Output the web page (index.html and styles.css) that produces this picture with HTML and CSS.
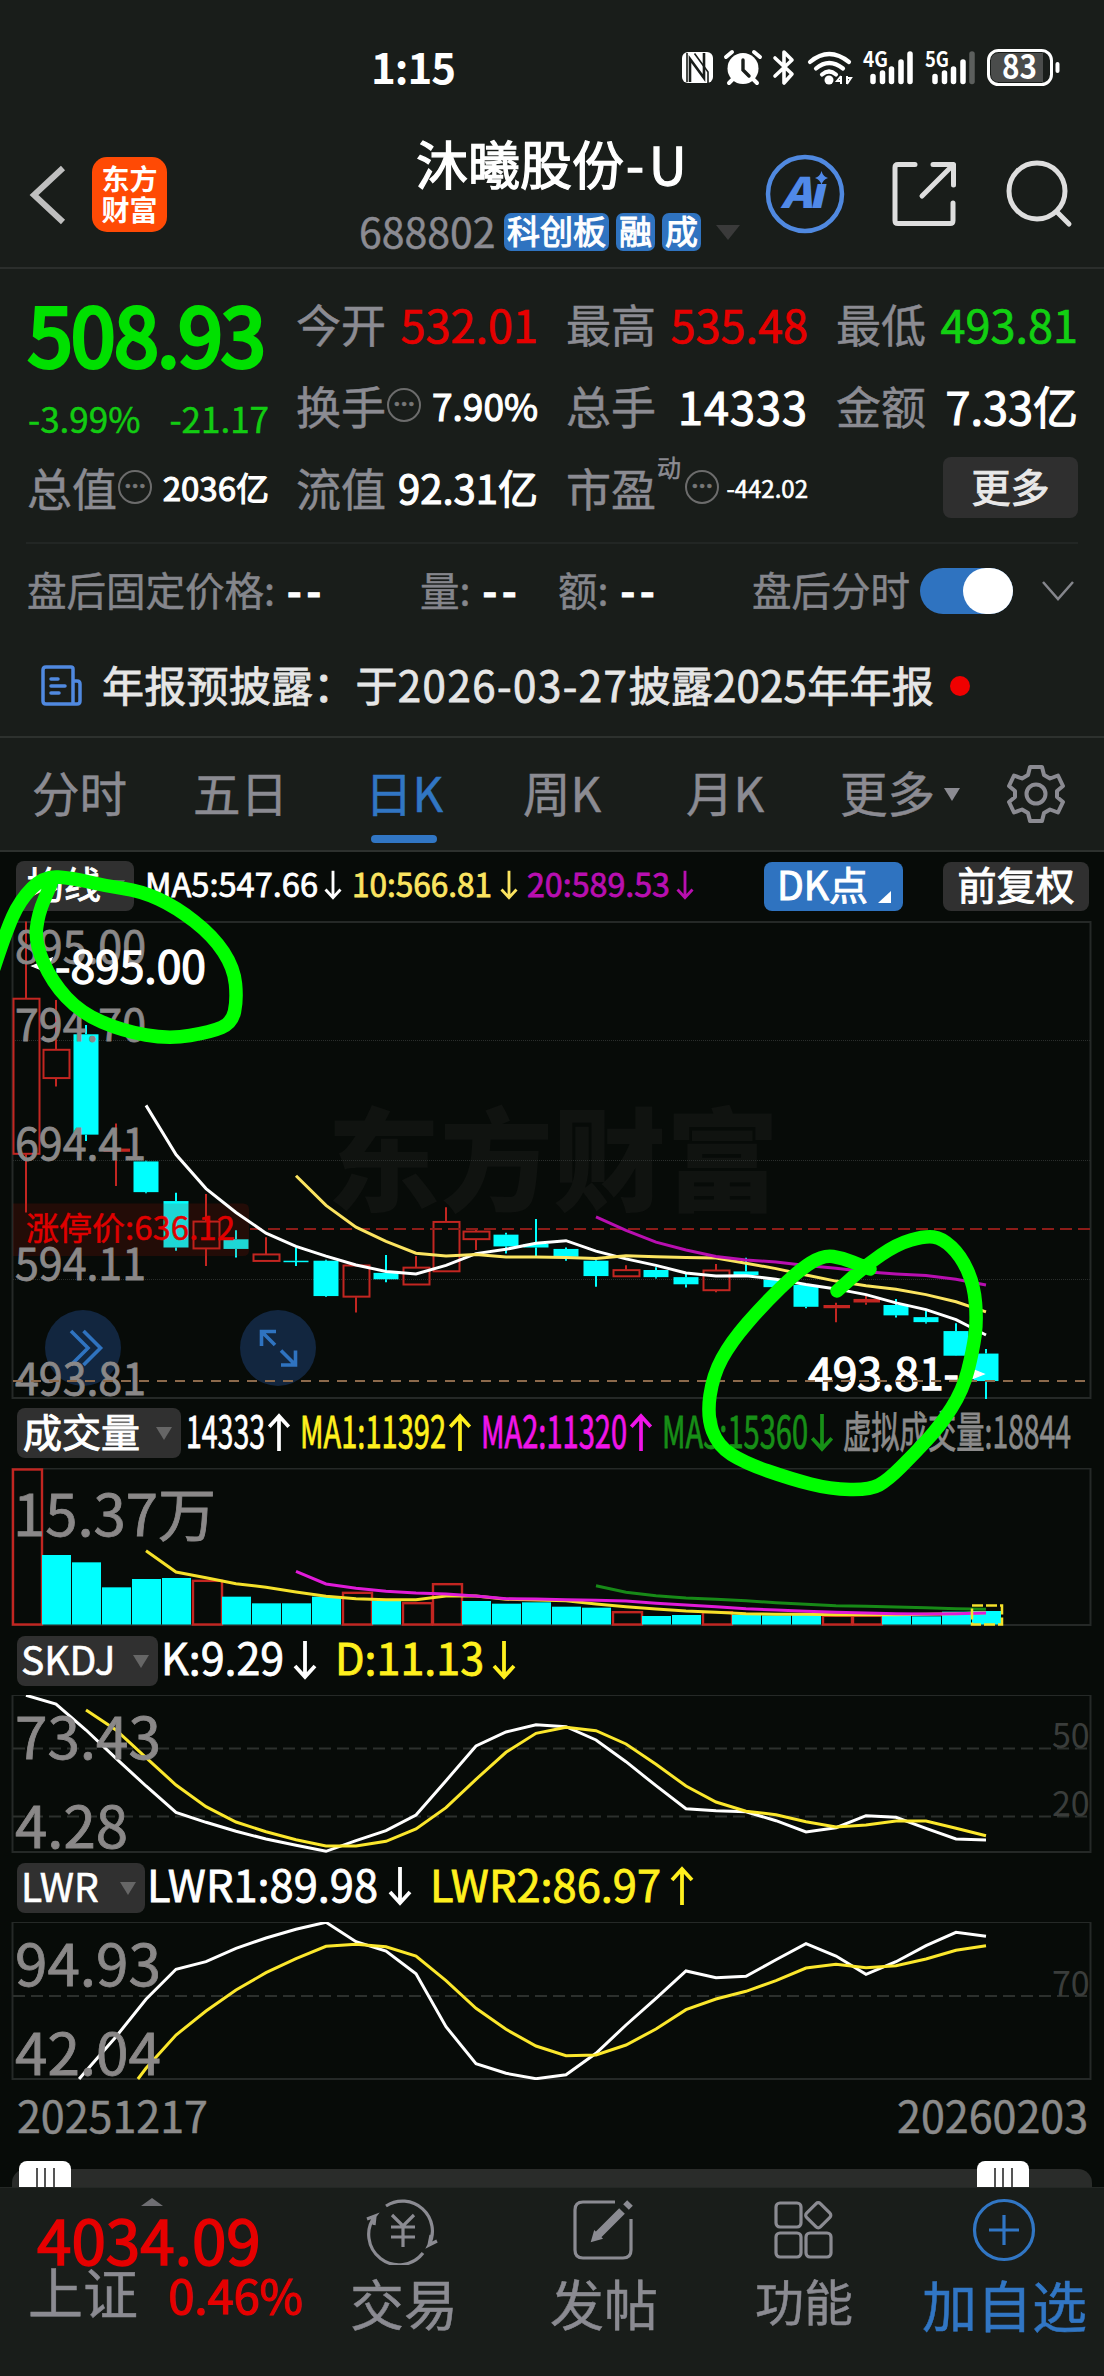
FILE: index.html
```html
<!DOCTYPE html>
<html lang="zh-CN">
<head>
    <meta charset="UTF-8">
    <meta name="viewport" content="width=device-width, initial-scale=1.0">
    <title>沐曦股份-U 688802</title>
    <link rel="stylesheet" href="styles.css">
</head>
<body>
<div class="phone">
    <div class="status-bar">
        <span class="clock">1:15</span>
        <svg class="status-icons" viewBox="670 36 400 64" width="400" height="64">
            <rect x="682" y="52" width="31" height="31" rx="6" fill="#fff"/>
            <path d="M690 82V59l14 19V53" fill="none" stroke="#191d1a" stroke-width="2.6"/>
            <path d="M694.500 53.500L708 72V83M687 53V82" fill="none" stroke="#191d1a" stroke-width="1.600"/>
            <circle cx="743" cy="68.500" r="15.500" fill="#fff"/>
            <path d="M726 57l6-5M760 57l-6-5M733 79l-4 4M753 79l4 4" stroke="#fff" stroke-width="4" stroke-linecap="round"/>
            <path d="M743 60v10l6 6" fill="none" stroke="#191d1a" stroke-width="3.400" stroke-linecap="round"/>
            <path d="M775 58l17 16-8 9V52l8 8-17 16" fill="none" stroke="#fff" stroke-width="3.600" stroke-linejoin="round" stroke-linecap="round"/>
            <g fill="none" stroke="#fff" stroke-width="4.200" stroke-linecap="round">
                <path d="M810 62q19-16 39 0"/>
                <path d="M816 68.500q13-11 27 0"/>
                <path d="M822 74.500q7-6 14 0"/>
            </g>
            <circle cx="829" cy="80" r="4.500" fill="#fff"/>
            <path d="M841 76v8M841 76l-4 5h4M847 84v-8M847 84l4-6h-4" stroke="#fff" stroke-width="2" fill="none"/>
            <text class="net" x="863" y="67" textLength="25" lengthAdjust="spacingAndGlyphs">4G</text>
            <text class="net" x="925" y="67" textLength="24" lengthAdjust="spacingAndGlyphs">5G</text>
            <g stroke="#fff" stroke-width="5.500" stroke-linecap="round">
                <path d="M873 76.500v5M882.500 73v8.500M891.500 69v12.500M901 62v19.500M910 54v27.500"/>
                <path d="M935 76.500v5M944.500 73v8.500M953.500 69v12.500M963 62v19.500"/>
                <path d="M972 54v27.500" stroke="#5c5f5d"/>
            </g>
            <rect x="988.500" y="50.500" width="63" height="34" rx="10" fill="#191d1a" stroke="#fff" stroke-width="3"/>
            <path d="M999 53h44v29h-44q-8 0-8-8v-13q0-8 8-8z" fill="#4a4c4b"/>
            <path d="M1057.500 64v7" stroke="#fff" stroke-width="4" stroke-linecap="round"/>
            <text class="battery" x="1002" y="79" textLength="35" lengthAdjust="spacingAndGlyphs">83</text>
        </svg>
    </div>

    <header class="header">
        <svg class="back" viewBox="0 0 40 64" width="40" height="64"><path d="M35 5L6 32l29 27" fill="none" stroke="#bfbfbf" stroke-width="6"/></svg>
        <div class="logo"><span>东方</span><span>财富</span></div>
        <div class="stock">
            <h1>沐曦股份<span>-U</span></h1>
            <div class="stock-sub">
                <span class="code">688802</span>
                <span class="tag">科创板</span>
                <span class="tag">融</span>
                <span class="tag">成</span>
                <i class="tri"></i>
            </div>
        </div>
        <svg class="header-icons" viewBox="750 140 340 100" width="340" height="100">
            <circle cx="804" cy="194" r="37" fill="none" stroke="#5089e0" stroke-width="4.500"/>
            <text class="ai" x="780" y="208" textLength="46" lengthAdjust="spacingAndGlyphs">Aı</text>
            <path d="M820.500 171q1.500 5.500 6.500 7-5 1.500-6.500 7-1.500-5.500-6.500-7 5-1.500 6.500-7z" fill="#5089e8"/>
            <g fill="none" stroke="#dedede" stroke-width="5" stroke-linecap="round" stroke-linejoin="round">
                <path d="M914 164.500h-17q-3 0-3 3v53q0 3 3 3h52q3 0 3-3V203"/>
                <path d="M932 164.500h20.500V185M951 166l-30 30"/>
                <circle cx="1036" cy="191" r="28"/>
                <path d="M1056 212l12 12"/>
            </g>
        </svg>
    </header>

    <section class="quote">
        <div class="quote-main">
            <div class="price">508.93</div>
            <div class="change"><span>-3.99%</span><span>-21.17</span></div>
            <div class="cell"><label>总值</label><i class="dots">•••</i><b class="v33">2036亿</b></div>
        </div>
        <div class="quote-grid">
            <div class="cell"><label>今开</label><b class="red">532.01</b></div>
            <div class="cell"><label>最高</label><b class="red">535.48</b></div>
            <div class="cell"><label>最低</label><b class="green">493.81</b></div>
            <div class="cell"><label>换手</label><i class="dots">•••</i><b class="v37">7.90%</b></div>
            <div class="cell"><label>总手</label><b class="wide">14333</b></div>
            <div class="cell"><label>金额</label><b>7.33亿</b></div>
            <div class="cell"><label>流值</label><b class="v40">92.31亿</b></div>
            <div class="cell"><label>市盈</label><sup>动</sup><i class="dots">•••</i><b class="v24">-442.02</b></div>
            <div class="cell"><button class="more">更多</button></div>
        </div>
    </section>

    <section class="after-hours">
        <span class="ah-price">盘后固定价格:<b>--</b></span>
        <span class="ah-vol">量:<b>--</b></span>
        <span class="ah-amt">额:<b>--</b></span>
        <span class="ah-line">盘后分时</span>
        <span class="toggle"><i></i></span>
        <svg viewBox="0 0 34 22" width="34" height="22"><path d="M2 2l15 17L32 2" fill="none" stroke="#85868c" stroke-width="2.500"/></svg>
    </section>

    <section class="notice">
        <svg viewBox="0 0 42 42" width="42" height="42" fill="none" stroke="#5089e0" stroke-width="3.500" stroke-linejoin="round" stroke-linecap="round">
            <path d="M5 2h25q2 0 2 2v35H5q-3 0-3-3V5q0-3 3-3zM32 16h4q3 0 3 3v17q0 3-3 3h-4M10 14h7M10 21h14M10 28h8"/>
        </svg>
        <p>年报预披露：于<span>2026-03-27</span>披露2025年年报</p>
        <i class="red-dot"></i>
    </section>

    <nav class="tabs">
        <span>分时</span>
        <span>五日</span>
        <span class="active">日K</span>
        <span>周K</span>
        <span>月K</span>
        <span>更多<i class="tri"></i></span>
        <svg viewBox="-30 -30 60 60" width="60" height="60" fill="none" stroke="#8b8b92" stroke-width="4" stroke-linejoin="round">
            <path d="M-6 -27H6L8 -19L14 -15.500L22 -18.500L27 -8L21 -3V3L27 8L22 18.500L14 15.500L8 19L6 27H-6L-8 19L-14 15.500L-22 18.500L-27 8L-21 3V-3L-27 -8L-22 -18.500L-14 -15.500L-8 -19Z"/>
            <circle r="9.500"/>
        </svg>
    </nav>

    <main class="charts">
        <svg width="0" height="0" class="defs">
            <symbol id="down" viewBox="0 0 24 40"><path d="M12 1v36M2 26l10 11 10-11" fill="none" stroke="currentColor" stroke-width="3.800"/></symbol>
            <symbol id="up" viewBox="0 0 24 40"><path d="M12 39V3M2 14L12 3l10 11" fill="none" stroke="currentColor" stroke-width="3.800"/></symbol>
        </svg>

        <div class="legend legend-ma">
            <span class="badge">均线<i class="tri"></i></span>
            <svg viewBox="140 852 600 69" width="600" height="69" class="t32">
                <g class="c-white"><text x="145" y="897" textLength="173" lengthAdjust="spacingAndGlyphs">MA5:547.66</text><use href="#down" x="323" y="870" width="20" height="30"/></g>
                <g class="c-lemon"><text x="352" y="897" textLength="140" lengthAdjust="spacingAndGlyphs">10:566.81</text><use href="#down" x="499" y="870" width="20" height="30"/></g>
                <g class="c-purple"><text x="527" y="897" textLength="143" lengthAdjust="spacingAndGlyphs">20:589.53</text><use href="#down" x="675" y="870" width="20" height="30"/></g>
            </svg>
            <span class="dk">DK点<i></i></span>
            <span class="fq">前复权</span>
        </div>
        <svg class="panel" id="kline" viewBox="0 921 1104 478" width="1104" height="478">
            <text class="watermark" x="327" y="1203" textLength="452" lengthAdjust="spacingAndGlyphs">东方财富</text>
            <rect class="frame" x="12.500" y="922" width="1078" height="476"/>
            <path class="dotted" d="M13 1040.500H1090M13 1160.500H1090M13 1279.500H1090"/>
            <g class="bars"></g>
            <path d="M13 1203.500H243q6 0 6 6V1250q0 6-6 6H13z" fill="#b01008" opacity=".17"/>
            <path d="M250 1229H1090" stroke="#8c1c18" stroke-width="2" stroke-dasharray="12 6"/>
            <g class="lines"></g>
            <text x="26" y="1240" class="limit" textLength="209" lengthAdjust="spacingAndGlyphs">涨停价:636.12</text>
            <g fill="none" stroke="#2f73c0" stroke-width="3.600">
                <circle class="round" cx="83" cy="1348" r="38"/>
                <path d="M71 1331l17 17-17 17M83.500 1331l17 17-17 17"/>
                <circle class="round" cx="278" cy="1348" r="38"/>
                <path d="M276 1331.500h-14.500v14.500M262 1332l13 13M281 1365h14.500v-14.500M295 1364.500l-14-14"/>
            </g>
            <g class="axis43">
                <text x="15" y="962.500" textLength="131" lengthAdjust="spacingAndGlyphs">895.00</text>
                <text x="15" y="1041" textLength="131" lengthAdjust="spacingAndGlyphs">794.70</text>
                <text x="15" y="1159.500" textLength="131" lengthAdjust="spacingAndGlyphs">694.41</text>
                <text x="15" y="1280" textLength="131" lengthAdjust="spacingAndGlyphs">594.11</text>
                <text x="15" y="1394.500" textLength="131" lengthAdjust="spacingAndGlyphs">493.81</text>
            </g>
            <g class="peak">
                <text x="55" y="983" textLength="151" lengthAdjust="spacingAndGlyphs">-895.00</text>
                <path d="M32 966l20-8-4 8 4 8z" fill="#fff"/>
                <text x="808" y="1390" textLength="151" lengthAdjust="spacingAndGlyphs">493.81-</text>
                <path d="M984 1374l-20-8 4 8-4 8z" fill="#fff"/>
            </g>
            <path d="M13 1381H1090" stroke="#8c6a4c" stroke-width="2" stroke-dasharray="10 8"/>
        </svg>

        <div class="legend legend-vol">
            <span class="badge">成交量<i class="tri"></i></span>
            <svg viewBox="181 1399 910 69" width="910" height="69" class="t43">
                <g class="c-white"><text x="186" y="1448" textLength="79" lengthAdjust="spacingAndGlyphs">14333</text><use href="#up" x="267" y="1413" width="24" height="39"/></g>
                <g class="c-yellow"><text x="300" y="1448" textLength="146" lengthAdjust="spacingAndGlyphs">MA1:11392</text><use href="#up" x="448" y="1413" width="24" height="39"/></g>
                <g class="c-magenta"><text x="481" y="1448" textLength="146" lengthAdjust="spacingAndGlyphs">MA2:11320</text><use href="#up" x="629" y="1413" width="24" height="39"/></g>
                <g class="c-green"><text x="662" y="1448" textLength="146" lengthAdjust="spacingAndGlyphs">MA3:15360</text><use href="#down" x="810" y="1413" width="24" height="39"/></g>
                <g class="c-gray"><text x="843" y="1448" textLength="228" lengthAdjust="spacingAndGlyphs">虚拟成交量:18844</text></g>
            </svg>
        </div>
        <svg class="panel" id="volume" viewBox="0 1468 1104 158" width="1104" height="158">
            <rect class="frame" x="12.500" y="1468.500" width="1078" height="156.500"/>
            <g class="bars"></g>
            <g class="lines"></g>
            <rect x="972" y="1605.500" width="30" height="19" fill="none" stroke="#f5e12a" stroke-width="2.500" stroke-dasharray="11 3"/>
            <text class="axis57" x="13" y="1536" textLength="203" lengthAdjust="spacingAndGlyphs">15.37万</text>
        </svg>

        <div class="legend legend-skdj">
            <span class="badge">SKDJ<i class="tri"></i></span>
            <svg viewBox="158 1626 500 69" width="500" height="69" class="t43">
                <g class="c-white"><text x="161" y="1675" textLength="123" lengthAdjust="spacingAndGlyphs">K:9.29</text><use href="#down" x="293" y="1640" width="24" height="40"/></g>
                <g class="c-yellow"><text x="335" y="1675" textLength="149" lengthAdjust="spacingAndGlyphs">D:11.13</text><use href="#down" x="492" y="1640" width="24" height="40"/></g>
            </svg>
        </div>
        <svg class="panel" id="skdj" viewBox="0 1695 1104 158" width="1104" height="158">
            <rect class="frame" x="12.500" y="1695" width="1078" height="157"/>
            <path class="dashed" d="M13 1748.500H1090M13 1816.500H1090"/>
            <text class="ref" x="1052" y="1748">50</text><text class="ref" x="1052" y="1816">20</text>
            <g class="lines"></g>
            <text class="axis57" x="15" y="1759" textLength="146" lengthAdjust="spacingAndGlyphs">73.43</text>
            <text class="axis57" x="15" y="1848" textLength="113" lengthAdjust="spacingAndGlyphs">4.28</text>
        </svg>

        <div class="legend legend-lwr">
            <span class="badge">LWR<i class="tri"></i></span>
            <svg viewBox="145 1853 600 69" width="600" height="69" class="t43">
                <g class="c-white"><text x="147" y="1902" textLength="231" lengthAdjust="spacingAndGlyphs">LWR1:89.98</text><use href="#down" x="388" y="1866" width="24" height="40"/></g>
                <g class="c-yellow"><text x="430" y="1902" textLength="231" lengthAdjust="spacingAndGlyphs">LWR2:86.97</text><use href="#up" x="670" y="1866" width="24" height="40"/></g>
            </svg>
        </div>
        <svg class="panel" id="lwr" viewBox="0 1922 1104 158" width="1104" height="158">
            <rect class="frame" x="12.500" y="1922" width="1078" height="157"/>
            <path class="dashed" d="M13 1996H1090"/>
            <text class="ref" x="1052" y="1996">70</text>
            <g class="lines"></g>
            <text class="axis57" x="15" y="1986" textLength="146" lengthAdjust="spacingAndGlyphs">94.93</text>
            <text class="axis57" x="15" y="2075" textLength="146" lengthAdjust="spacingAndGlyphs">42.04</text>
        </svg>

        <div class="dates"><span>20251217</span><span>20260203</span></div>
        <div class="slider"><div class="track"></div><i class="handle left"></i><i class="handle right"></i></div>
    </main>

    <footer class="bottom">
        <div class="index">
            <i class="tri-up"></i>
            <div class="index-value">4034.09</div>
            <div class="index-row"><span>上证</span><b>0.46%</b></div>
        </div>
        <div class="item">
            <svg viewBox="-40 -35 80 70" width="80" height="70" fill="none" stroke="#8b8b92" stroke-width="3.200">
                <path d="M-17 -24A30 30 0 0 1 26 15l8-4M26 15l2-10M20 23A30 30 0 0 1 -28 -14l-8 3M-28 -14l-1 9"/>
                <path d="M-11 -15L0 -4 11 -15M0 -4V17M-12 -3H12M-12 7H12"/>
            </svg>
            <span>交易</span>
        </div>
        <div class="item">
            <svg viewBox="-35 -35 70 70" width="70" height="70" fill="none" stroke="#8b8b92" stroke-width="3.200">
                <path d="M12 -28H-20q-8 0-8 8V20q0 8 8 8H20q8 0 8-8V-11"/>
                <path d="M-6 6L19 -19M23 -23L27 -27" stroke-width="8"/>
                <path d="M-10 10l2-7 5 5z" fill="#8b8b92"/>
            </svg>
            <span>发帖</span>
        </div>
        <div class="item small">
            <svg viewBox="-35 -35 70 70" width="70" height="70" fill="none" stroke="#8b8b92" stroke-width="3.200" stroke-linejoin="round">
                <rect x="-27" y="-27" width="25" height="24" rx="4"/>
                <rect x="-27" y="3" width="25" height="24" rx="4"/>
                <rect x="3" y="3" width="25" height="24" rx="4"/>
                <rect x="5.500" y="-24.500" width="19.500" height="19.500" rx="3" transform="rotate(45 15.250 -14.750)"/>
            </svg>
            <span>功能</span>
        </div>
        <div class="item blue">
            <svg viewBox="-35 -35 70 70" width="70" height="70" fill="none" stroke="#3176c4" stroke-width="3.200">
                <circle r="29.500"/><path d="M-15 0H15M0 -15V15"/>
            </svg>
            <span>加自选</span>
        </div>
    </footer>

    <svg class="marks" viewBox="0 0 1104 2376" width="1104" height="2376"></svg>
</div>
<script src="chart.js"></script>
</body>
</html>
```

FILE: styles.css
```css
* {
    box-sizing: border-box;
}

body {
    margin: 0;
    background: #191d1a;
    color: #fff;
    font-family: "Noto Sans CJK SC", "Noto Sans", sans-serif;
    -webkit-text-stroke: 0.5px;
}

i {
    font-style: normal;
}

b {
    font-weight: 400;
    -webkit-text-stroke: 1.1px;
}

.phone {
    position: relative;
    width: 1104px;
    height: 2376px;
    overflow: hidden;
}

.tri {
    display: inline-block;
    border: 8px solid transparent;
    border-top: 13px solid #666;
    border-bottom: 0;
}

/* status bar */
.status-bar {
    display: flex;
    height: 100px;
    padding: 36px 34px 0 371px;
    justify-content: space-between;
}

.clock {
    font-size: 42px;
    font-weight: 700;
    line-height: 60px;
    letter-spacing: -1px;
    -webkit-text-stroke: 0;
}

.net {
    font-size: 21px;
    font-weight: 700;
    fill: #fff;
}

.battery {
    font-size: 33px;
    font-weight: 700;
    fill: #fff;
}

/* header */
.header {
    display: flex;
    height: 169px;
    border-bottom: 2px solid #2b2e2c;
}

.back {
    margin: 63px 24px 0 28px;
}

.logo {
    display: flex;
    flex-direction: column;
    justify-content: center;
    width: 75px;
    height: 75px;
    margin-top: 57px;
    padding-bottom: 2px;
    border-radius: 15px;
    background: #ff4a05;
    font-size: 28px;
    font-weight: 700;
    line-height: 31px;
    text-align: center;
    -webkit-text-stroke: 0;
}

.stock {
    width: 385px;
    margin-left: 192px;
}

.stock h1 {
    margin: 28px 0 0 57px;
    font-size: 52px;
    font-weight: 400;
    line-height: 70px;
    white-space: nowrap;
    -webkit-text-stroke: 1.3px;
}

.stock h1 span {
    letter-spacing: 5px;
    margin-left: 2px;
}

.stock-sub {
    display: flex;
    align-items: center;
    height: 38px;
    margin-top: 15px;
}

.code {
    width: 145px;
    font-size: 41px;
    line-height: 38px;
    color: #8b8b92;
    padding-bottom: 4px;
}

.tag {
    height: 38px;
    margin-right: 7px;
    padding: 0 3px;
    border-radius: 7px;
    background: #2f73c0;
    font-size: 33px;
    line-height: 34px;
    -webkit-text-stroke: 1px;
}

.stock-sub .tri {
    margin-left: 8px;
    border-width: 15px 12px 0;
    border-top-color: #3a3a3a;
}

.header-icons {
    margin: 40px 0 0 7px;
}

.ai {
    font-size: 42px;
    font-weight: 900;
    font-style: italic;
    fill: #5089e8;
}

/* quote */
.quote {
    display: flex;
    height: 275px;
    margin: 0 26px;
    padding: 13px 0 0 2px;
    border-bottom: 2px solid #222624;
}

.quote-main {
    width: 242px;
    margin-right: 28px;
}

.price {
    height: 100px;
    font-size: 80px;
    line-height: 100px;
    letter-spacing: -1.3px;
    color: #00e000;
    -webkit-text-stroke: 4px;
}

.change {
    display: flex;
    justify-content: space-between;
    height: 64px;
    font-size: 35px;
    line-height: 72px;
    color: #12cc12;
}

.quote-grid {
    display: grid;
    grid-template-columns: 241px 241px 241px;
    grid-auto-rows: 82px;
    column-gap: 29px;
}

.cell {
    display: flex;
    align-items: center;
    height: 82px;
    white-space: nowrap;
}

.cell label {
    margin-left: -1px;
    font-size: 45px;
    color: #8b8b92;
}

.cell b {
    margin-left: auto;
    font-size: 45px;
}

.cell .wide { letter-spacing: 1px; }
.cell .v40 { font-size: 40px; }
.cell .v37 { font-size: 37px; }
.cell .v33 { font-size: 33px; }
.cell .v24 { font-size: 24px; -webkit-text-stroke: 0.6px; }

.cell .red,
.cell .green {
    -webkit-text-stroke: 0.7px;
}

.cell sup {
    align-self: flex-start;
    margin: 6px 3px 0 1px;
    font-size: 24px;
    line-height: 30px;
    color: #8b8b92;
}

.dots {
    width: 34px;
    height: 34px;
    margin-left: 1px;
    border: 2.5px solid #6c6c6c;
    border-radius: 50%;
    font-family: "Liberation Sans", sans-serif;
    font-size: 15px;
    line-height: 28px;
    letter-spacing: 2px;
    text-indent: 2px;
    text-align: center;
    color: #777;
}

.red { color: #e60000; }
.green { color: #12d012; }

.more {
    width: 135px;
    height: 61px;
    margin-left: auto;
    padding: 0 0 5px;
    border: 0;
    border-radius: 8px;
    background: #2f2f2f;
    color: #e8e8e8;
    font: 400 39px "Noto Sans CJK SC", sans-serif;
    -webkit-text-stroke: 1px;
}

/* after hours */
.after-hours {
    display: flex;
    align-items: center;
    height: 93px;
    padding-left: 27px;
    font-size: 39.5px;
    line-height: 88px;
    color: #85868c;
    white-space: nowrap;
}

.after-hours b {
    margin-left: 12px;
    color: #fff;
    font-weight: 700;
    letter-spacing: 5px;
}

.ah-price { width: 393px; }
.ah-vol { width: 138px; }
.ah-amt { width: 194px; }
.ah-line { width: 168px; }

.after-hours span:not(.toggle) {
    padding-bottom: 3px;
}

.toggle {
    display: flex;
    justify-content: flex-end;
    width: 93px;
    height: 46px;
    margin-right: 28px;
    border-radius: 23px;
    background: #2f73c0;
}

.toggle i {
    width: 50px;
    height: 46px;
    border-radius: 25px;
    background: #fff;
}

/* notice */
.notice {
    display: flex;
    align-items: center;
    height: 101px;
    padding: 0 0 2px 41px;
    border-bottom: 2px solid #2d312e;
}

.notice p {
    margin: -5px 16px 0 19px;
    font-size: 42px;
    letter-spacing: 0.25px;
    color: #e6e6e6;
    white-space: nowrap;
    -webkit-text-stroke: 0.8px;
}

.notice p span {
    letter-spacing: 1.5px;
}

.red-dot {
    width: 20px;
    height: 20px;
    border-radius: 10px;
    background: #f00000;
}

/* tabs */
.tabs {
    display: grid;
    grid-template-columns: 161px 172px 158px 163px 154px 166px 60px;
    height: 114px;
    padding-left: 32px;
    border-bottom: 2px solid #2d312e;
    font-size: 47.5px;
    line-height: 107px;
    color: #8b8b92;
    white-space: nowrap;
}

.tabs .tri {
    margin: 0 0 11px 9px;
    border-top-color: #8b8b92;
}

.tabs svg {
    margin-top: 26px;
}

.tabs .active {
    color: #3176c4;
}

.tabs .active::after {
    content: "";
    display: block;
    width: 66px;
    height: 8px;
    margin: -10px 0 0 6px;
    border-radius: 4px;
    background: #3176c4;
}

/* charts */
.charts {
    background: #070b08;
}

.defs,
.panel,
.legend svg {
    display: block;
}

.defs {
    position: absolute;
}

.legend {
    display: flex;
    height: 69px;
    padding-left: 17px;
}

.legend-ma {
    padding-left: 16px;
}

.badge {
    display: flex;
    align-items: center;
    justify-content: space-between;
    height: 50px;
    margin-top: 9px;
    padding: 0 9px 7px 6px;
    border-radius: 8px;
    background: #303030;
    font-size: 39px;
    -webkit-text-stroke: 1px;
}

.badge .tri {
    margin-top: 7px;
}

.legend-ma .badge { width: 118px; font-size: 37px; padding-left: 11px; margin-right: 6px; }
.legend-vol .badge { width: 164px; }
.legend-skdj .badge { width: 141px; padding-left: 4px; }
.legend-lwr .badge { width: 128px; padding-left: 4px; }
.legend-skdj .badge,
.legend-lwr .badge { margin-top: 10px; -webkit-text-stroke: 0.6px; }

.legend text {
    stroke: currentColor;
    stroke-width: 0.8px;
}

.t32 text { font-size: 32px; }
.t43 text { font-size: 43px; }

.c-white { fill: #fff; color: #fff; }
.c-lemon { fill: #fbe460; color: #fbe460; }
.c-purple { fill: #b80fb0; color: #b80fb0; }
.c-yellow { fill: #fff01e; color: #fff01e; }
.c-magenta { fill: #f015e8; color: #f015e8; }
.c-green { fill: #178f17; color: #178f17; }
.c-gray { fill: #8b8b8b; color: #8b8b8b; }

.dk,
.fq {
    height: 49px;
    margin-top: 10px;
    border-radius: 8px;
    font-size: 39px;
    line-height: 43px;
    -webkit-text-stroke: 1px;
}

.dk {
    display: flex;
    width: 139px;
    margin-left: 24px;
    padding-left: 13px;
    background: #2f73c0;
}

.dk i {
    margin: 29px 0 0 10px;
    height: 0;
    border-left: 13px solid transparent;
    border-bottom: 12px solid #fff;
}

.fq {
    width: 146px;
    margin-left: 40px;
    text-align: center;
    background: #303030;
}

.frame {
    fill: none;
    stroke: #252927;
    stroke-width: 2;
}

.dotted {
    stroke: #2a2e2c;
    stroke-dasharray: 1 1;
}

.dashed {
    stroke: #2c302d;
    stroke-width: 2;
    stroke-dasharray: 12 6;
}

.round {
    fill: #12263f;
    stroke: none;
}

.watermark {
    font-size: 112px;
    font-weight: 900;
    fill: #101310;
}

.limit {
    font-size: 32px;
    fill: #e00000;
    stroke: #e00000;
    stroke-width: 0.5px;
}

.axis43,
.axis57 {
    font-size: 43px;
    fill: #8a8888;
    stroke: #8a8888;
    stroke-width: 0.8px;
}

.axis57 {
    font-size: 57px;
}

.ref {
    font-size: 34px;
    fill: #3a3d3b;
}

.peak {
    font-size: 43px;
    fill: #fff;
    stroke: #fff;
    stroke-width: 1.3px;
}

.dates {
    display: flex;
    justify-content: space-between;
    height: 81px;
    padding: 0 16px 0 17px;
    font-size: 43px;
    line-height: 69px;
    color: #8b8b8b;
}

.slider {
    position: relative;
    height: 26px;
    overflow: hidden;
}

.slider::before {
    content: "";
    display: block;
    height: 8px;
}

.track {
    height: 36px;
    margin: 0 12px;
    border-radius: 14px;
    background: #2a2c2a;
}

.handle {
    position: absolute;
    top: 0;
    width: 52px;
    height: 40px;
    border-radius: 8px;
    background: linear-gradient(90deg, transparent 17px, #555 17px 19px, transparent 19px 25px, #555 25px 27px, transparent 27px 34px, #555 34px 36px, transparent 36px) 0 7px no-repeat #fff;
}

.handle.left { left: 19px; }
.handle.right { left: 977px; }

/* bottom bar */
.bottom {
    display: grid;
    grid-template-columns: 303px 200px 200px 200px 201px;
    height: 191px;
    background: #191d1a;
    border-top: 1px solid #242825;
}

.tri-up {
    display: block;
    width: 0;
    margin: 10px 0 0 141px;
    border: 11px solid transparent;
    border-top: 0;
    border-bottom: 8px solid #6e6e72;
}

.index-value {
    margin-left: 37px;
    font-size: 62px;
    line-height: 64px;
    color: #e60000;
    -webkit-text-stroke: 1.6px;
}

.index-row {
    display: flex;
    align-items: baseline;
    margin-top: -13px;
    padding-left: 28px;
    line-height: 66px;
    font-size: 55px;
    color: #8b8b92;
    white-space: nowrap;
}

.index-row b {
    margin-left: 30px;
    font-size: 47px;
    color: #e60000;
}

.item {
    display: flex;
    flex-direction: column;
    align-items: center;
    padding-top: 7px;
    font-size: 54px;
    line-height: 76px;
    color: #8b8b92;
    white-space: nowrap;
}

.item svg {
    height: 70px;
}

.item span {
    margin-left: 2px;
}

.item.small {
    font-size: 49px;
    line-height: 70px;
}

.item.blue {
    color: #3176c4;
    font-size: 55px;
}

.marks {
    position: absolute;
    left: 0;
    top: 0;
    pointer-events: none;
}

.marks path {
    fill: none;
    stroke: #00ff00;
    stroke-width: 13.5;
    stroke-linecap: round;
    stroke-linejoin: round;
}
```

FILE: chart.js
```js
const NS = "http://www.w3.org/2000/svg";
const UP = "#c22621";
const DOWN = "#00ffff";
const cx = (i) => 26 + 30 * i;

function add(parent, tag, attrs) {
    const el = document.createElementNS(NS, tag);
    for (const k in attrs) el.setAttribute(k, attrs[k]);
    parent.appendChild(el);
}

function line(panel, start, values, color, y) {
    const pts = values.map((v, n) => {
        // a pair carries its own fractional slot
        const [i, val] = Array.isArray(v) ? v : [start + n, v];
        return cx(i) + "," + y(val).toFixed(1);
    });
    add(document.querySelector(panel + " .lines"), "polyline", {
        points: pts.join(" "), fill: "none", stroke: color, "stroke-width": 3
    });
}

// high, body top, body bottom, low, 1 = rising
const candles = [
    [200, 415, 852, 1015, 1], [420, 558, 640, 662, 1], [490, 516, 797, 815, 0], [766, 836, 845, 941, 1],
    [870, 872, 958, 961, 0], [960, 983, 1113, 1122, 0], [963, 1039, 1117, 1165, 1], [1065, 1090, 1117, 1141, 0],
    [1084, 1131, 1152, 1152, 1], [1113, 1150, 1153, 1165, 0], [1147, 1150, 1249, 1251, 0], [1160, 1162, 1252, 1295, 1],
    [1134, 1184, 1202, 1210, 0], [1137, 1168, 1218, 1218, 1], [1000, 1040, 1181, 1181, 1], [1064, 1067, 1091, 1120, 1],
    [1072, 1077, 1110, 1130, 0], [1033, 1103, 1113, 1137, 0], [1113, 1117, 1139, 1150, 0], [1148, 1150, 1193, 1223, 0],
    [1163, 1175, 1195, 1195, 1], [1168, 1176, 1196, 1200, 0], [1185, 1196, 1216, 1225, 0], [1159, 1176, 1234, 1238, 1],
    [1142, 1180, 1190, 1195, 0], [1200, 1203, 1224, 1224, 0], [1216, 1218, 1279, 1283, 0], [1268, 1274, 1283, 1322, 1],
    [1248, 1257, 1267, 1273, 1], [1257, 1274, 1303, 1309, 0], [1291, 1308, 1322, 1326, 0], [1325, 1347, 1416, 1417, 0],
    [1397, 1410, 1487, 1537, 0]
];
const ky = (v) => 850 + v / 2.8;
const kBars = document.querySelector("#kline .bars");
candles.forEach(([hi, top, bottom, lo, rise], i) => {
    const x = cx(i), color = rise ? UP : DOWN;
    add(kBars, "path", {
        d: `M${x} ${ky(hi)}V${ky(top)}M${x} ${ky(bottom)}V${ky(lo)}`, stroke: color, "stroke-width": 2
    });
    const h = (bottom - top) / 2.8;
    if (rise && h > 5) {
        add(kBars, "rect", {
            x: x - 12.5, y: ky(top) + 0.5, width: 26, height: h - 1, fill: "none", stroke: color, "stroke-width": 2
        });
    } else {
        add(kBars, "rect", { x: x - 12.5, y: ky(top), width: rise ? 26.5 : 25, height: Math.max(h, 1.5), fill: color });
    }
});
line("#kline", 4, [715, 853, 948, 1015, 1073, 1110, 1137, 1162, 1180, 1187, 1163, 1130, 1118, 1101, 1094, 1123, 1145,
    1163, 1184, 1193, 1192, 1202, 1217, 1229, 1245, 1268, 1287, 1315, 1358], "#fff", ky);
line("#kline", 9, [912, 995, 1056, 1096, 1129, 1137, 1133, 1140, 1140, 1141, 1144, 1136, 1139, 1141, 1142, 1157, 1172,
    1190, 1207, 1220, 1230, 1245, 1265, 1293], "#fbe460", ky);
line("#kline", 19, [1027, 1065, 1098, 1120, 1138, 1148, 1154, 1163, 1171, 1181, 1187, 1191, 1202, 1218], "#b80fb0", ky);

const ly = (v) => 1390 + v / 3;
const volumes = [237, 495, 517, 592, 567, 564, 571, 620, 640, 640, 620, 607, 632, 638, 581, 633, 641, 637, 650, 653, 665,
    678, 675, 665, 674, 676, 675, 676, 676, 677, 679, 665, 663];
const rising = [0, 6, 11, 13, 14, 20, 23, 27, 28];
const vBars = document.querySelector("#volume .bars");
volumes.forEach((v, i) => {
    const y = ly(v);
    if (rising.includes(i)) {
        add(vBars, "rect", {
            x: cx(i) - 13, y: y + 0.5, width: 29, height: 1624 - y, fill: "#070b08", stroke: UP, "stroke-width": 2.4
        });
    } else {
        add(vBars, "rect", { x: cx(i) - 14, y, width: 29, height: 1624.5 - y, fill: DOWN });
    }
});
line("#volume", 4, [482, 546, 563, 581, 592, 606, 619, 626, 629, 629, 618, 618, 628, 630, 632, 642, 650, 657, 663, 667,
    671, 673, 673, 674, 674, 674, 673, 671, 668], "#f5e12a", ly);
line("#volume", 9, [544, 582, 595, 604, 609, 612, 618, 626, 627, 629, 631, 633, 640, 645, 650, 656, 660, 664, 667, 669,
    671, 672, 671, 669], "#e01bd8", ly);
line("#volume", 19, [587, 607, 617, 624, 628, 632, 638, 643, 647, 649, 651, 653, 656, 658], "#178a17", ly);

line("#skdj", 0, [916, 942, 1020, 1105, 1188, 1267, 1297, 1324, 1347, 1366, 1384, 1352, 1322, 1275, 1172, 1068, 1026,
    1004, 1010, 1050, 1115, 1187, 1256, 1262, 1265, 1292, 1326, 1313, 1277, 1282, 1315, 1347, 1350], "#fff", ly);
line("#skdj", 2, [960, 1020, 1103, 1185, 1250, 1296, 1325, 1349, 1368, 1368, 1354, 1317, 1253, 1168, 1087, 1030, 1012,
    1022, 1062, 1123, 1188, 1236, 1264, 1274, 1295, 1311, 1305, 1293, 1293, 1315, 1337], "#fbe72c", ly);

const wy = (v) => 1850 + v / 3;
line("#lwr", 1, [[1.77, 687], 663, 560, 448, 358, 335, 295, 264, 238, 217, 275, 303, 371, 530, 641, 670, 686, 674, 610,
    525, 445, 363, 383, 379, 329, 281, 318, 373, 335, 287, 247, 259], "#fff", wy);
line("#lwr", 3, [[3.73, 687], 655, 555, 483, 420, 368, 326, 289, 283, 290, 318, 392, 475, 538, 588, 617, 615, 585, 537,
    479, 447, 424, 392, 354, 343, 353, 347, 327, 301, 287], "#fbe72c", wy);

// hand-drawn circles, smoothed through the midpoints
function stroke(pts) {
    let d = `M${pts[0]}`;
    for (let i = 1; i < pts.length - 1; i++) {
        const mx = (pts[i][0] + pts[i + 1][0]) / 2, my = (pts[i][1] + pts[i + 1][1]) / 2;
        d += `Q${pts[i]} ${mx},${my}`;
    }
    d += `L${pts[pts.length - 1]}`;
    add(document.querySelector(".marks"), "path", { d });
}
stroke([[-6, 968], [5, 934], [20, 900], [44, 876], [72, 878], [106, 886], [141, 891], [176, 907], [213, 936], [234, 968],
    [237, 1000], [232, 1023], [211, 1032], [169, 1039], [123, 1031], [81, 1013], [52, 982], [35, 943], [38, 914], [51, 884]]);
stroke([[870, 1269], [862, 1266], [843, 1258], [823, 1255], [798, 1271], [763, 1305], [731, 1342], [713, 1375], [707, 1416],
    [718, 1446], [745, 1463], [791, 1479], [830, 1489], [870, 1490], [888, 1480], [915, 1453], [940, 1426], [963, 1390],
    [973, 1350], [977, 1321], [974, 1285], [961, 1256], [942, 1238], [925, 1236], [897, 1244], [865, 1266], [837, 1291]]);
```
